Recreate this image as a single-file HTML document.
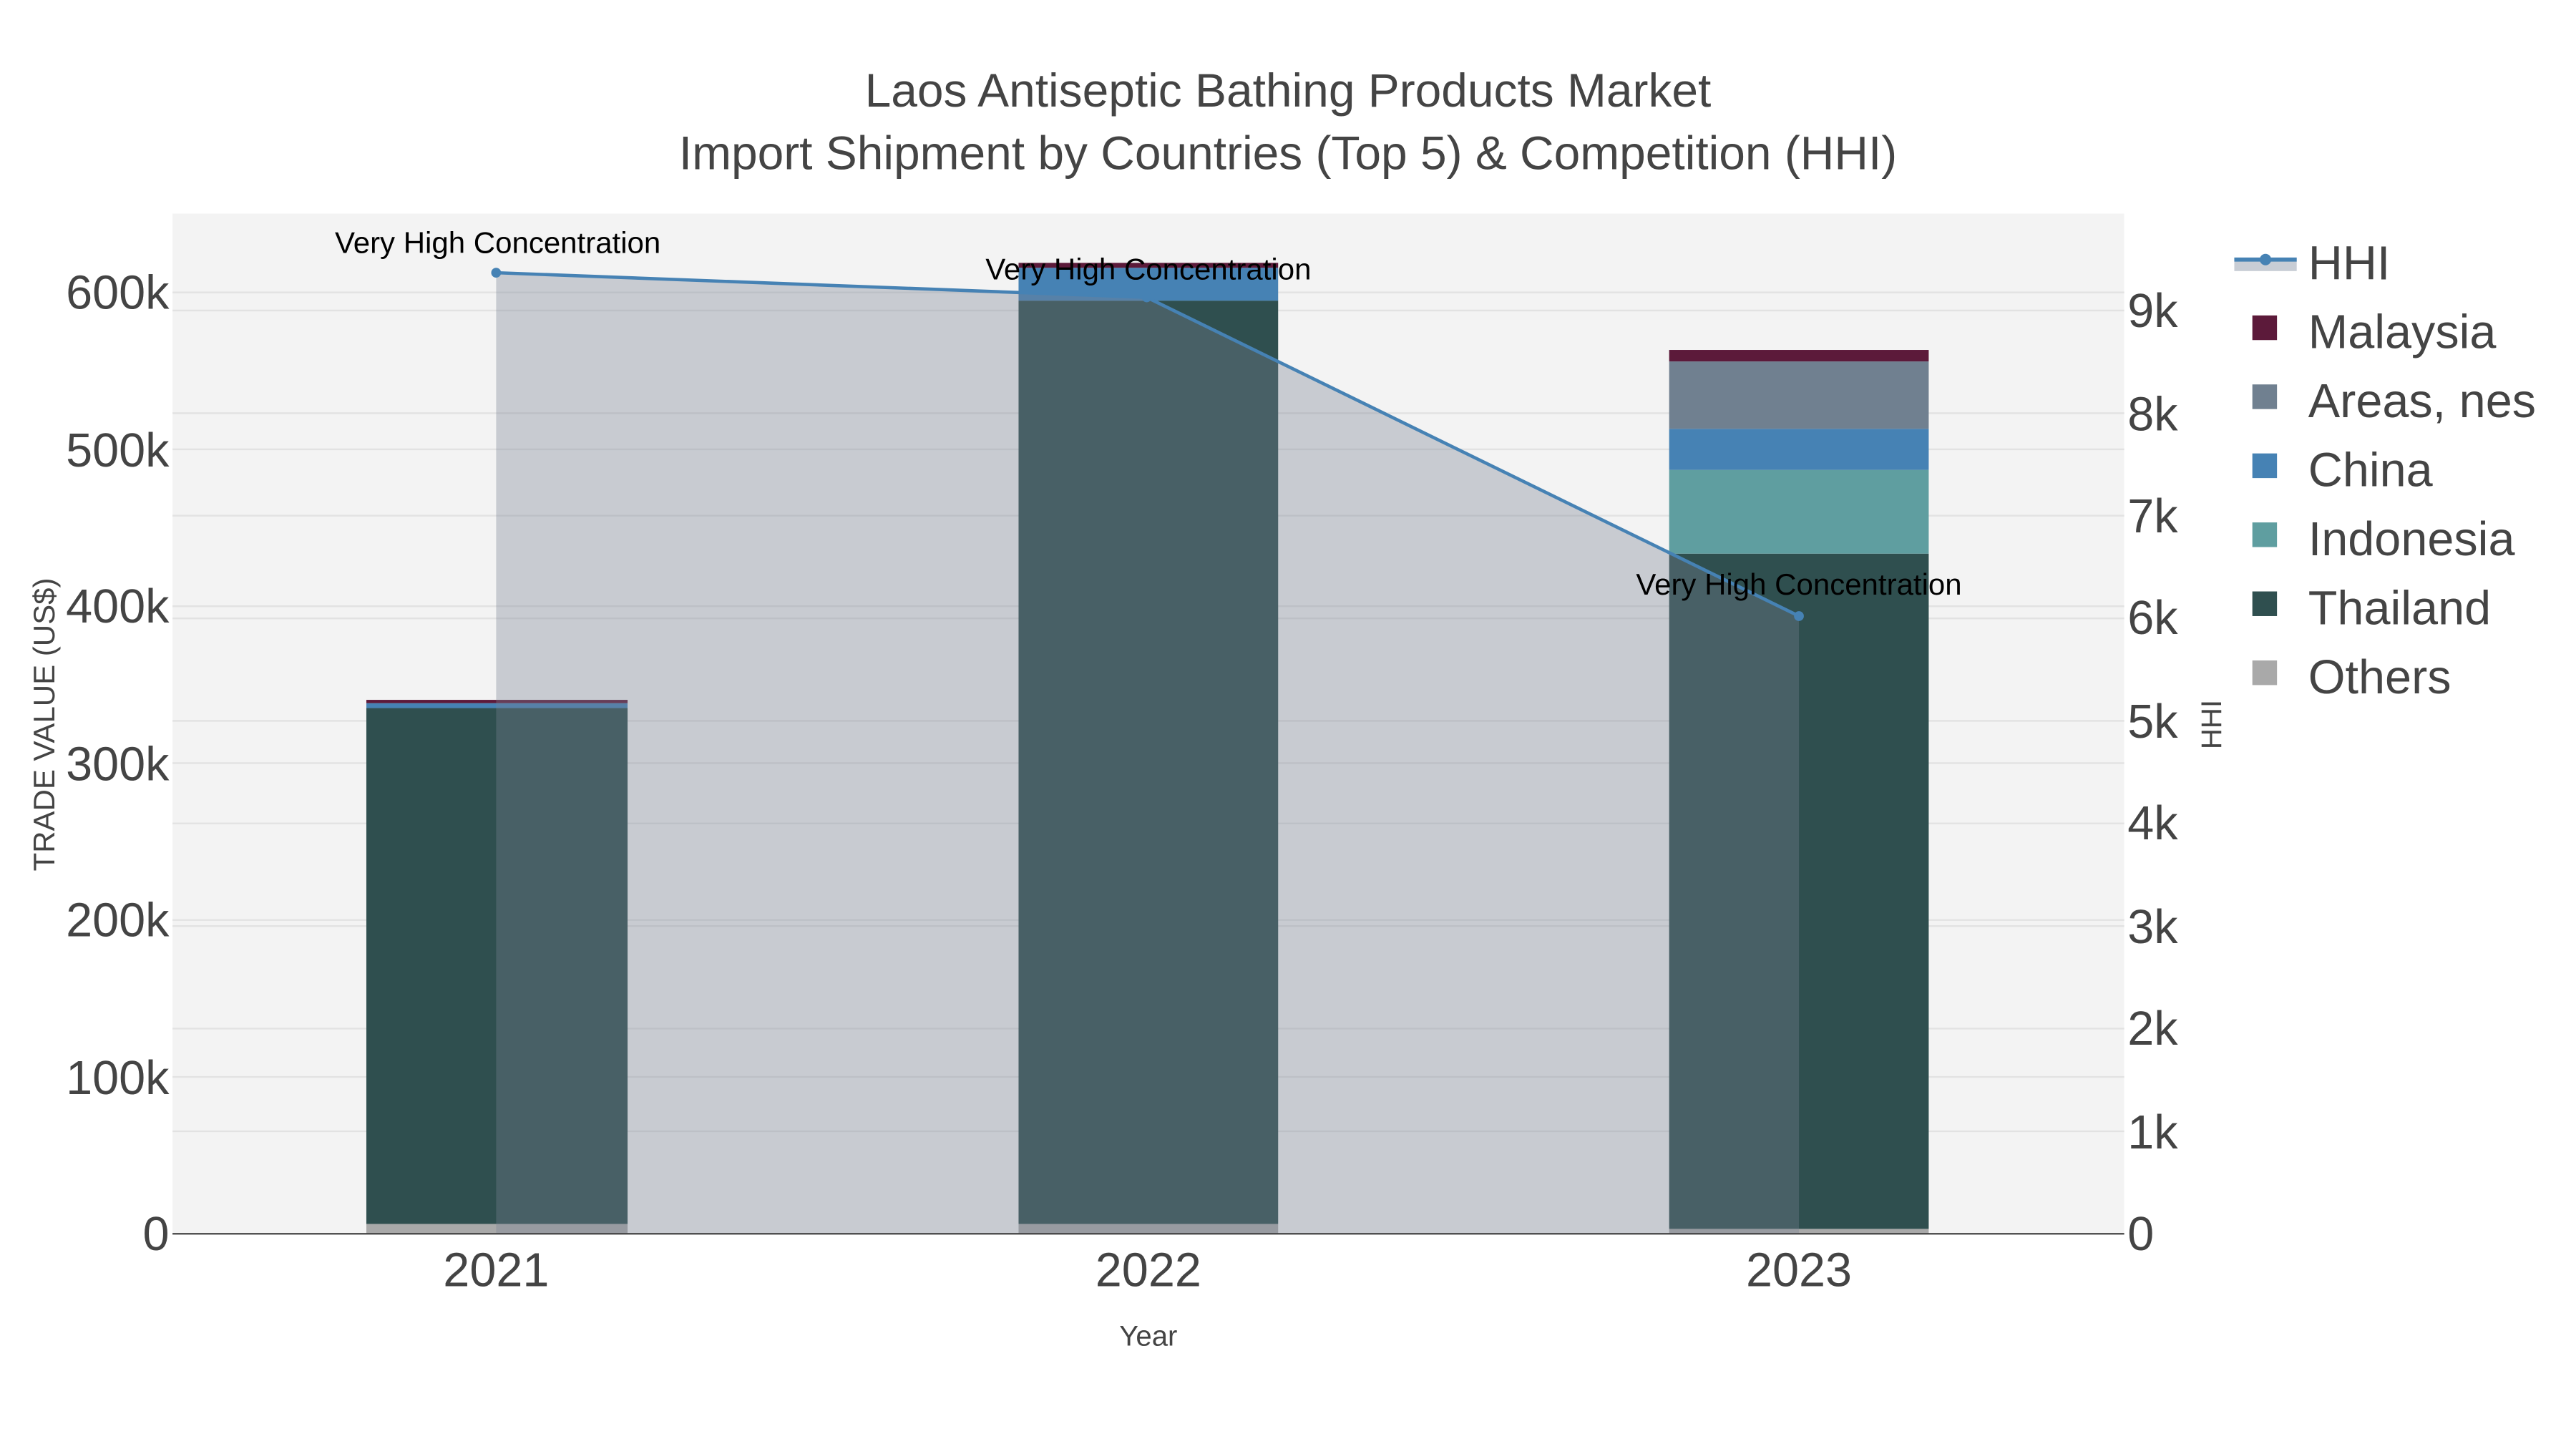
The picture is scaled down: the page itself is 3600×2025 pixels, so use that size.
<!DOCTYPE html>
<html><head><meta charset="utf-8"><style>html,body{margin:0;padding:0;background:#fff}svg{display:block}</style></head>
<body>
<svg width="3600" height="2025" viewBox="0 0 1568 882" xmlns="http://www.w3.org/2000/svg" font-family="Liberation Sans, sans-serif">
<rect width="1568" height="882" fill="#fff"/>
<rect x="105" y="130" width="1188" height="621" fill="#f3f3f3"/>
<g stroke="#e2e2e2" stroke-width="1">
<line x1="105" x2="1293" y1="655.5" y2="655.5"/><line x1="105" x2="1293" y1="560" y2="560"/><line x1="105" x2="1293" y1="464.5" y2="464.5"/><line x1="105" x2="1293" y1="369" y2="369"/><line x1="105" x2="1293" y1="273.5" y2="273.5"/><line x1="105" x2="1293" y1="178" y2="178"/>
<line x1="105" x2="1293" y1="688.6" y2="688.6"/><line x1="105" x2="1293" y1="626.1" y2="626.1"/><line x1="105" x2="1293" y1="563.7" y2="563.7"/><line x1="105" x2="1293" y1="501.2" y2="501.2"/><line x1="105" x2="1293" y1="438.8" y2="438.8"/><line x1="105" x2="1293" y1="376.4" y2="376.4"/><line x1="105" x2="1293" y1="313.9" y2="313.9"/><line x1="105" x2="1293" y1="251.5" y2="251.5"/><line x1="105" x2="1293" y1="189" y2="189"/>
</g>
<rect x="223" y="745" width="159" height="6" fill="#a9a9a9"/>
<rect x="223" y="431" width="159" height="314" fill="#2f4f4f"/>
<rect x="223" y="428" width="159" height="3" fill="#4682b4"/>
<rect x="223" y="426" width="159" height="2" fill="#5c1a3a"/>
<rect x="620" y="745" width="158" height="6" fill="#a9a9a9"/>
<rect x="620" y="183" width="158" height="562" fill="#2f4f4f"/>
<rect x="620" y="163" width="158" height="20" fill="#4682b4"/>
<rect x="620" y="160" width="158" height="3" fill="#5c1a3a"/>
<rect x="1016" y="748" width="158" height="3" fill="#a9a9a9"/>
<rect x="1016" y="337" width="158" height="411" fill="#2f4f4f"/>
<rect x="1016" y="286" width="158" height="51" fill="#5f9ea0"/>
<rect x="1016" y="261" width="158" height="25" fill="#4682b4"/>
<rect x="1016" y="220" width="158" height="41" fill="#708090"/>
<rect x="1016" y="213" width="158" height="7" fill="#5c1a3a"/>
<polygon points="302,166 698,181 1095,375 1095,751 302,751" fill="rgba(119,128,147,0.35)"/>
<polyline points="302,166 698,181 1095,375" fill="none" stroke="#4682b4" stroke-width="2"/>
<circle cx="302" cy="166" r="3" fill="#4682b4"/><circle cx="698" cy="181" r="3" fill="#4682b4"/><circle cx="1095" cy="375" r="3" fill="#4682b4"/>
<line x1="105" x2="1293" y1="751" y2="751" stroke="#444" stroke-width="1"/>
<g font-size="18.3" fill="#000" text-anchor="middle">
<text x="303" y="154">Very High Concentration</text>
<text x="699" y="170">Very High Concentration</text>
<text x="1095" y="362">Very High Concentration</text>
</g>
<g font-size="28.7" fill="#444" text-anchor="middle">
<text x="784" y="65">Laos Antiseptic Bathing Products Market</text>
<text x="784" y="103">Import Shipment by Countries (Top 5) &amp; Competition (HHI)</text>
</g>
<g font-size="29" fill="#444" text-anchor="end">
<text x="103" y="761">0</text><text x="103" y="666">100k</text><text x="103" y="570">200k</text><text x="103" y="475">300k</text><text x="103" y="379">400k</text><text x="103" y="284">500k</text><text x="103" y="188">600k</text>
</g>
<g font-size="29" fill="#444" text-anchor="start">
<text x="1295" y="761">0</text><text x="1295" y="699">1k</text><text x="1295" y="636">2k</text><text x="1295" y="574">3k</text><text x="1295" y="511">4k</text><text x="1295" y="449">5k</text><text x="1295" y="386">6k</text><text x="1295" y="324">7k</text><text x="1295" y="262">8k</text><text x="1295" y="199">9k</text>
</g>
<g font-size="29" fill="#444" text-anchor="middle">
<text x="302" y="783">2021</text><text x="699" y="783">2022</text><text x="1095" y="783">2023</text>
</g>
<text x="699" y="819" font-size="17.5" fill="#444" text-anchor="middle">Year</text>
<text transform="translate(33,441) rotate(-90)" font-size="18.3" fill="#444" text-anchor="middle">TRADE VALUE (US$)</text>
<text transform="translate(1352,441) rotate(-90)" font-size="17.5" fill="#444" text-anchor="middle">HHI</text>
<rect x="1360" y="157" width="38" height="8" fill="#c8cdd5"/>
<line x1="1360" x2="1398" y1="158" y2="158" stroke="#4682b4" stroke-width="2.5"/>
<circle cx="1379" cy="158" r="3.5" fill="#4682b4"/>
<rect x="1371" y="192" width="15" height="15" fill="#5c1a3a"/>
<rect x="1371" y="234" width="15" height="15" fill="#708090"/>
<rect x="1371" y="276" width="15" height="15" fill="#4682b4"/>
<rect x="1371" y="318" width="15" height="15" fill="#5f9ea0"/>
<rect x="1371" y="360" width="15" height="15" fill="#2f4f4f"/>
<rect x="1371" y="402" width="15" height="15" fill="#a9a9a9"/>
<g font-size="29" fill="#444">
<text x="1405" y="170">HHI</text><text x="1405" y="212">Malaysia</text><text x="1405" y="254">Areas, nes</text><text x="1405" y="296">China</text><text x="1405" y="338">Indonesia</text><text x="1405" y="380">Thailand</text><text x="1405" y="422">Others</text>
</g>
</svg>
</body></html>
